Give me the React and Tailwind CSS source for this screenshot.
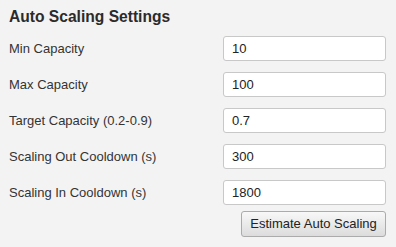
export default function App() {
  const fields = [
    { label: 'Min Capacity', value: '10' },
    { label: 'Max Capacity', value: '100' },
    { label: 'Target Capacity (0.2-0.9)', value: '0.7' },
    { label: 'Scaling Out Cooldown (s)', value: '300' },
    { label: 'Scaling In Cooldown (s)', value: '1800' },
  ];

  return (
    <div className="w-[396px] h-[247px] bg-[#f3f3f3] pl-[9px] pr-[10px] font-['Liberation_Sans',Arial,sans-serif] text-[#333]">
      <div className="h-[31px] pt-[7px]">
        <h2 className="text-[15.6px] leading-[20px] font-bold text-[#2b2b2b]">Auto Scaling Settings</h2>
      </div>
      {fields.map((f) => (
        <div key={f.label} className="h-[36px] pt-[5px] flex items-start justify-between">
          <label className="h-[25px] flex items-center text-[13px] text-[#333]">{f.label}</label>
          <input
            type="text"
            defaultValue={f.value}
            className="w-[163px] h-[25px] bg-white border border-[#c8c8c8] rounded-[3px] px-[8px] text-[13px] text-[#222] outline-none"
          />
        </div>
      ))}
      <div className="flex justify-end">
        <button className="w-[145px] h-[26px] rounded-[3px] border border-[#ababab] bg-gradient-to-b from-[#f8f8f8] to-[#dcdcdc] text-[13px] text-[#222]">
          Estimate Auto Scaling
        </button>
      </div>
    </div>
  );
}
